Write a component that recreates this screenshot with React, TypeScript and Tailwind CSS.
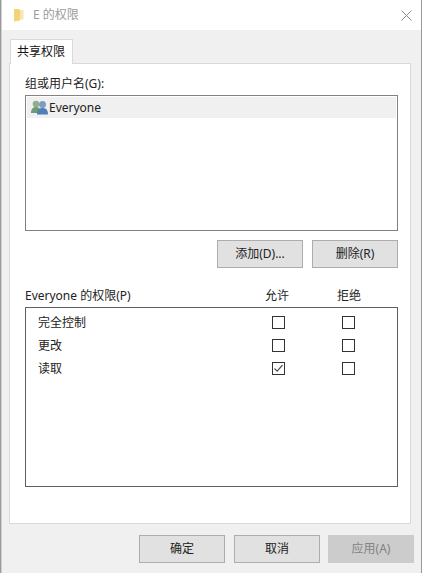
import React from 'react'

const font = "font-['Noto_Sans','Noto_Sans_CJK_SC',sans-serif]"

const permissions = [
  { name: '完全控制', allow: false },
  { name: '更改', allow: false },
  { name: '读取', allow: true },
]

function Btn({ label, disabled }: { label: string; disabled?: boolean }) {
  return (
    <div
      className={
        disabled
          ? 'w-[86px] h-[28px] flex items-center justify-center bg-[#cccccc] border border-[#cccccc] text-[#838383] text-[12px]'
          : 'w-[86px] h-[28px] flex items-center justify-center bg-[#e1e1e1] border border-[#adadad] text-[#222] text-[12px]'
      }
    >
      {label}
    </div>
  )
}

function Box({ checked }: { checked?: boolean }) {
  return (
    <div className="w-[13px] h-[13px] border border-[#333] bg-white flex items-center justify-center">
      {checked && (
        <svg width="11" height="11" viewBox="0 0 11 11">
          <path d="M1.5 5.5 L4.2 8.2 L9.5 2" fill="none" stroke="#555" strokeWidth="1.2" />
        </svg>
      )}
    </div>
  )
}

function UsersIcon() {
  return (
    <svg width="17" height="15" viewBox="0 0 17 15" className="shrink-0">
      <circle cx="5" cy="4" r="3.3" fill="#8fae8a" />
      <path d="M0 13c0-4 2-6 5-6s5 2 5 6z" fill="#6f9a78" />
      <circle cx="11.5" cy="4.5" r="3.5" fill="#7f9cc0" />
      <path d="M6 14.5c0-4.5 2-6.5 5.5-6.5s5.5 2 5.5 6.5z" fill="#4f7fb5" />
    </svg>
  )
}

function FolderIcon() {
  return (
    <svg width="12" height="14" viewBox="0 0 12 14" className="shrink-0">
      <path d="M1 1h5l1 1v10.5l-6 1z" fill="#f3d27a" />
      <path d="M7 2h3.5v9.5H7z" fill="#f8e6ad" />
    </svg>
  )
}

function CloseIcon() {
  return (
    <svg width="11" height="11" viewBox="0 0 11 11" className="ml-auto mr-[9px] shrink-0">
      <path d="M0.5 0.5 L10.5 10.5 M10.5 0.5 L0.5 10.5" stroke="#8a8a8a" strokeWidth="1" fill="none" />
    </svg>
  )
}

export default function App() {
  return (
    <div className={`${font} w-[422px] h-[573px] bg-[#9a9a9a] pl-[1px] pr-[1px] overflow-hidden`}>
      <div className="w-[420px] h-[573px] bg-[#f0f0f0] flex flex-col border-l border-[#d0d0d0]">
        {/* Title bar */}
        <div className="h-[30px] bg-white flex items-center pl-[11px] shrink-0">
          <FolderIcon />
          <span className="ml-[8px] text-[12px] text-[#9b9b9b]">E 的权限</span>
          <CloseIcon />
        </div>

        {/* Tab */}
        <div className="pl-[8px] pt-[9px] shrink-0 flex">
          <div className="relative z-10 w-[63px] h-[25px] pr-[1px] bg-white border border-b-0 border-[#d9d9d9] flex items-center justify-center text-[12px] text-[#111]">
            共享权限
          </div>
        </div>

        {/* Panel */}
        <div className="mt-[-1px] ml-[7px] w-[402px] h-[461px] bg-white border border-[#d9d9d9] shrink-0 pl-[15px] pr-[12px] flex flex-col">
          <div className="mt-[10px] h-[20px] flex items-center text-[12px] text-[#222]">组或用户名(G):</div>
          <div className="mt-[1px] w-[373px] h-[136px] border border-[#828282] p-[1px] pb-0">
            <div className="h-[21px] w-[369px] bg-[#f0f0f0] flex items-center pl-[4px] gap-[1px] text-[12px] text-[#222]">
              <UsersIcon />
              <span>Everyone</span>
            </div>
          </div>
          <div className="mt-[9px] w-[373px] flex justify-end gap-[9px]">
            <Btn label="添加(D)..." />
            <Btn label="删除(R)" />
          </div>

          <div className="mt-[18px] w-[373px] h-[20px] flex items-center text-[12px] text-[#222]">
            <span className="w-[217px]">Everyone 的权限(P)</span>
            <span className="w-[70px] text-center">允许</span>
            <span className="ml-[2px] w-[70px] text-center">拒绝</span>
          </div>
          <div className="mt-[1px] w-[373px] h-[180px] border border-[#5f5f5f] pt-[3px]">
            {permissions.map((p) => (
              <div key={p.name} className="h-[23px] flex items-center text-[12px] text-[#222] pl-[12px]">
                <span className="w-[233px]">{p.name}</span>
                <div className="w-[14px] flex justify-center"><Box checked={p.allow} /></div>
                <div className="ml-[56px] w-[14px] flex justify-center"><Box /></div>
              </div>
            ))}
          </div>
        </div>

        {/* Footer buttons */}
        <div className="mt-[11px] ml-[137px] flex gap-[9px]">
          <Btn label="确定" />
          <Btn label="取消" />
          <div className="-ml-[1px]"><Btn label="应用(A)" disabled /></div>
        </div>
      </div>
    </div>
  )
}
